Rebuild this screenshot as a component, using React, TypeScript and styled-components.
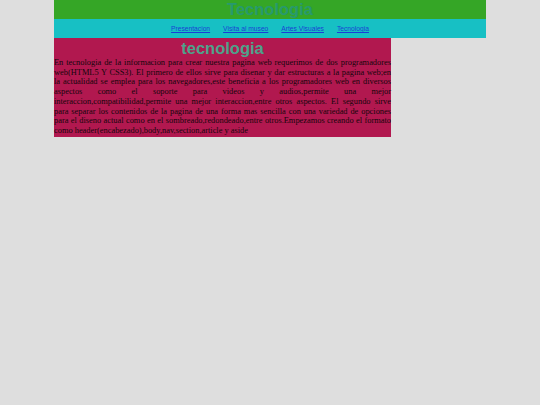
import React from 'react';
import styled, { createGlobalStyle } from 'styled-components';

const GlobalStyle = createGlobalStyle`
  html, body {
    margin: 0;
    padding: 0;
    background: #dedede;
  }
`;

const Page = styled.div`
  width: 432px;
  margin: 0 auto;
`;

const Header = styled.header`
  background: #35a626;
  height: 19px;
  display: flex;
  align-items: center;
  justify-content: center;
  h1 {
    margin: 0;
    font-family: "Liberation Sans", Arial, sans-serif;
    font-size: 16.5px;
    font-weight: 700;
    line-height: 19px;
    color: #27996e;
  }
`;

const Nav = styled.nav`
  background: #17c0c4;
  height: 19px;
  display: flex;
  align-items: center;
  justify-content: center;
  gap: 13px;
  a {
    font-family: "Liberation Sans", Arial, sans-serif;
    font-size: 6.7px;
    color: #1a3fd6;
    text-decoration: underline;
  }
`;

const Article = styled.article`
  background: #b1184f;
  width: 337px;
  padding-bottom: 1px;
  h2 {
    margin: 0;
    padding-top: 1px;
    text-align: center;
    font-family: "Liberation Sans", Arial, sans-serif;
    font-size: 16.5px;
    font-weight: 700;
    line-height: 19px;
    color: #4ea28b;
  }
`;

const Text = styled.p`
  margin: 0;
  font-family: "Liberation Serif", "Times New Roman", serif;
  font-size: 8.4px;
  line-height: 9.7px;
  color: #14060b;
`;

const Line = styled.span<{ $last?: boolean }>`
  display: block;
  white-space: nowrap;
  text-align: ${({ $last }) => ($last ? 'left' : 'justify')};
  text-align-last: ${({ $last }) => ($last ? 'left' : 'justify')};
`;

const links = ['Presentacion', 'Visita al museo', 'Artes Visuales', 'Tecnologia'];

const lines = [
  'En tecnologia de la informacion para crear nuestra pagina web requerimos de dos programadores',
  'web(HTML5 Y CSS3). El primero de ellos sirve para disenar y dar estructuras a la pagina web;en',
  'la actualidad se emplea para los navegadores,este beneficia a los programadores web en diversos',
  'aspectos como el soporte para videos y audios,permite una mejor',
  'interaccion,compatibilidad,permite una mejor interaccion,entre otros aspectos. El segundo sirve',
  'para separar los contenidos de la pagina de una forma mas sencilla con una variedad de opciones',
  'para el diseno actual como en el sombreado,redondeado,entre otros.Empezamos creando el formato',
  'como header(encabezado),body,nav,section,article y aside',
];

export default function App() {
  return (
    <>
      <GlobalStyle />
      <Page>
        <Header>
          <h1>Tecnologia</h1>
        </Header>
        <Nav>
          {links.map((l) => (
            <a key={l} href="#">{l}</a>
          ))}
        </Nav>
        <Article>
          <h2>tecnologia</h2>
          <Text>
            {lines.map((l, i) => (
              <Line key={i} $last={i === lines.length - 1}>{l} </Line>
            ))}
          </Text>
        </Article>
      </Page>
    </>
  );
}
